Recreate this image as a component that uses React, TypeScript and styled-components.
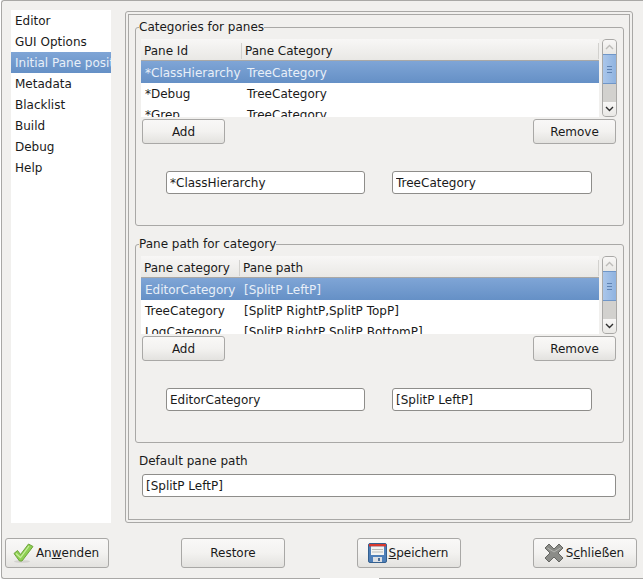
import React from 'react'
import styled, {createGlobalStyle} from 'styled-components'

const GlobalStyle = createGlobalStyle`
  html, body {
    margin: 0;
    padding: 0;
    background: #fff;
  }
  * {
    box-sizing: border-box;
  }
`

const Window = styled.div`
  position: relative;
  width: 642px;
  height: 579px;
  margin-left: 1px;
  padding: 9px 5px 9px 8px;
  display: flex;
  flex-direction: column;
  background: #f1f0ee;
  border: 1px solid #a9a8a6;
  border-right: 0;
  border-radius: 3px 0 0 3px;
  font-family: "DejaVu Sans", sans-serif;
  font-size: 12px;
  color: #1a1a1a;
`
const BottomGap = styled.div`
  position: absolute;
  left: 318px;
  bottom: -1px;
  width: 59px;
  height: 1px;
  background: #fff;
`
const Main = styled.div`
  display: flex;
  height: 513px;
  margin-left: 1px;
`
const Sidebar = styled.ul`
  list-style: none;
  margin: 0 14px 0 0;
  padding: 0;
  width: 100px;
  background: #fff;
  overflow: hidden;
`
const SideItem = styled.li<{$active?: boolean}>`
  height: 21px;
  line-height: 21px;
  padding: 1px 0 0 4px;
  white-space: nowrap;
  color: ${p => (p.$active ? '#e8eff8' : '#1a1a1a')};
  background: ${p => (p.$active ? 'linear-gradient(#7fa5d6, #6590c6)' : 'transparent')};
`
const NotebookOuter = styled.div`
  width: 508px;
  height: 512px;
  margin-top: 1px;
  padding: 2px;
  border: 1px solid #a9a8a6;
  border-radius: 3px;
`
const NotebookInner = styled.div`
  height: 100%;
  padding: 5px 5px 0 6px;
  border: 1px solid #a9a8a6;
  display: flex;
  flex-direction: column;
`
const Group = styled.fieldset`
  margin: 0 0 11px;
  padding: 0 6px 0 5px;
  height: 206px;
  min-width: 0;
  border: 1px solid #a9a8a6;
  border-radius: 3px;
`
const GroupTitle = styled.legend`
  padding: 0;
  margin-left: -2px;
  height: 15px;
  line-height: 15px;
`
const TableRow = styled.div`
  display: flex;
  gap: 3px;
  height: 78px;
  margin-top: 4px;
`
const Table = styled.div`
  width: 458px;
  height: 78px;
  overflow: hidden;
  background: #fff;
`
const HeaderRow = styled.div`
  display: flex;
  height: 22px;
  padding-top: 3px;
  align-items: center;
  background: linear-gradient(#f8f7f6, #e9e8e5);
  border-bottom: 1px solid #a9a8a6;
`
const HeaderCell = styled.div<{$width?: number}>`
  height: 16px;
  line-height: 16px;
  padding-left: 3px;
  width: ${p => (p.$width ? `${p.$width}px` : 'auto')};
  flex: ${p => (p.$width ? 'none' : 1)};
  border-right: 1px solid #d2d1ce;
`
const Row = styled.div<{$selected?: boolean}>`
  display: flex;
  height: ${p => (p.$selected ? 22 : 21)}px;
  line-height: 21px;
  padding-top: ${p => (p.$selected ? 2 : 1)}px;
  white-space: nowrap;
  color: ${p => (p.$selected ? '#e8eff8' : '#1a1a1a')};
  background: ${p => (p.$selected ? 'linear-gradient(#7fa5d6, #6590c6)' : 'transparent')};
`
const Cell = styled.div<{$width: number}>`
  width: ${p => p.$width}px;
  flex: none;
  padding-left: 4px;
`
const Scrollbar = styled.div`
  width: 15px;
  height: 78px;
  display: flex;
  flex-direction: column;
  border: 1px solid #a9a8a6;
  border-radius: 4px;
  overflow: hidden;
  background: #d2d1ce;
`
const ScrollButton = styled.div`
  height: 14px;
  flex: none;
  display: flex;
  align-items: center;
  justify-content: center;
  background: linear-gradient(#f8f7f6, #e9e8e5);
`
const ScrollThumb = styled.div`
  height: 30px;
  flex: none;
  display: flex;
  flex-direction: column;
  align-items: center;
  justify-content: center;
  gap: 2px;
  background: linear-gradient(90deg, #aac6ea, #8fb3e0);
  border-top: 1px solid #6f96c8;
  border-bottom: 1px solid #6f96c8;
`
const ThumbLine = styled.div`
  width: 5px;
  height: 1px;
  background: #5f83b3;
`
const ScrollTrack = styled.div`
  flex: 1;
`
const ActionRow = styled.div`
  display: flex;
  justify-content: space-between;
  margin: 2px 0 0 1px;
  width: 474px;
`
const PushButton = styled.button`
  display: flex;
  align-items: center;
  justify-content: center;
  width: 83px;
  height: 25px;
  padding: 0;
  font: inherit;
  color: #1a1a1a;
  background: linear-gradient(#f9f8f7 0%, #f3f2f0 50%, #e3e2df 100%);
  border: 1px solid #a9a8a6;
  border-radius: 3px;
`
const FieldRow = styled.div`
  display: flex;
  gap: 27px;
  margin: 27px 0 0 25px;
`
const TextInput = styled.input<{$width: number}>`
  display: block;
  width: ${p => p.$width}px;
  height: 23px;
  padding: 0 3px;
  font: inherit;
  color: #1a1a1a;
  background: #fff;
  border: 1px solid #8e8d8a;
  border-radius: 3px;
  outline: none;
`
const DefaultPath = styled.div`
  padding-left: 7px;
`
const DefaultLabel = styled.div`
  height: 16px;
  line-height: 16px;
  margin: -1px 0 5px -3px;
`
const Footer = styled.div`
  display: flex;
  justify-content: space-between;
  margin: 15px 1px 0 -5px;
`
const DialogButton = styled.button`
  display: flex;
  align-items: center;
  justify-content: center;
  gap: 2px;
  width: 104px;
  height: 30px;
  padding: 0;
  font: inherit;
  color: #1a1a1a;
  background: linear-gradient(#f9f8f7 0%, #f3f2f0 50%, #e3e2df 100%);
  border: 1px solid #a9a8a6;
  border-radius: 3px;
`
const ButtonLabel = styled.span`
  margin-right: 2px;
`
const Mnemonic = styled.span`
  text-decoration: underline;
`

const CheckIcon = () => (
  <svg width="21" height="20" viewBox="0 0 21 20">
    <ellipse cx="9" cy="18.5" rx="8" ry="1.3" fill="#d3d2cf" />
    <path d="M1 10.5 L4.5 7.5 L7.5 11.5 L15.5 1 L20 3.5 L9 18 L6.5 18 Z" fill="#8ed052" stroke="#6ea33c" strokeWidth="1" strokeLinejoin="round" />
    <path d="M3 10.5 L7.5 14.5 L16 3" fill="none" stroke="#c9ee9f" strokeWidth="1.2" />
  </svg>
)

const SaveIcon = () => (
  <svg width="19" height="20" viewBox="0 0 19 20">
    <rect x="0.5" y="0.5" width="18" height="19" rx="1.5" fill="#4f7fb8" stroke="#35608f" />
    <rect x="1" y="1" width="17" height="2.5" fill="#d8392f" />
    <rect x="3" y="3.5" width="13" height="8.5" fill="#f4f4f2" />
    <path d="M4 6.5h11M4 9h11" stroke="#bcbcb9" strokeWidth="1" />
    <rect x="5" y="14" width="9" height="5" fill="#dcdfe3" />
    <rect x="10" y="15" width="2" height="3" fill="#4d6f99" />
  </svg>
)

const CloseIcon = () => (
  <svg width="20" height="20" viewBox="0 0 20 20">
    <path d="M1 5 L5 1 L10 6 L15 1 L19 5 L14 10 L19 15 L15 19 L10 14 L5 19 L1 15 L6 10 Z" fill="#8b8c88" stroke="#656662" strokeWidth="1" strokeLinejoin="round" />
    <path d="M3.5 5 L10 9 L16.5 5" fill="none" stroke="#b4b5b1" strokeWidth="1" />
  </svg>
)

const ArrowUp = () => (
  <svg width="9" height="6" viewBox="0 0 9 6">
    <path d="M1 5 L4.5 1.5 L8 5" fill="none" stroke="#bdbcb9" strokeWidth="1.4" />
  </svg>
)

const ArrowDown = () => (
  <svg width="9" height="6" viewBox="0 0 9 6">
    <path d="M1 1 L4.5 4.5 L8 1" fill="none" stroke="#2e2e2e" strokeWidth="1.4" />
  </svg>
)

interface PaneTableProps {
  headers: [string, string]
  headerWidth: number
  firstWidth: number
  rows: [string, string][]
}

const PaneTable = ({headers, headerWidth, firstWidth, rows}: PaneTableProps) => (
  <TableRow>
    <Table>
      <HeaderRow>
        <HeaderCell $width={headerWidth}>{headers[0]}</HeaderCell>
        <HeaderCell>{headers[1]}</HeaderCell>
      </HeaderRow>
      {rows.map((row, i) => (
        <Row key={row[0]} $selected={i === 0}>
          <Cell $width={firstWidth}>{row[0]}</Cell>
          <Cell $width={300}>{row[1]}</Cell>
        </Row>
      ))}
    </Table>
    <Scrollbar>
      <ScrollButton><ArrowUp /></ScrollButton>
      <ScrollThumb>
        <ThumbLine />
        <ThumbLine />
        <ThumbLine />
      </ScrollThumb>
      <ScrollTrack />
      <ScrollButton><ArrowDown /></ScrollButton>
    </Scrollbar>
  </TableRow>
)

interface PaneGroupProps extends PaneTableProps {
  title: string
  values: [string, string]
}

const PaneGroup = ({title, values, ...table}: PaneGroupProps) => (
  <Group>
    <GroupTitle>{title}</GroupTitle>
    <PaneTable {...table} />
    <ActionRow>
      <PushButton>Add</PushButton>
      <PushButton>Remove</PushButton>
    </ActionRow>
    <FieldRow>
      <TextInput $width={199} readOnly value={values[0]} />
      <TextInput $width={200} readOnly value={values[1]} />
    </FieldRow>
  </Group>
)

const sections = ['Editor', 'GUI Options', 'Initial Pane positions', 'Metadata', 'Blacklist', 'Build', 'Debug', 'Help']

const App = () => (
  <>
    <GlobalStyle />
    <Window>
      <Main>
        <Sidebar>
          {sections.map(name => (
            <SideItem key={name} $active={name.startsWith('Initial')}>{name}</SideItem>
          ))}
        </Sidebar>
        <NotebookOuter>
          <NotebookInner>
            <PaneGroup
              title="Categories for panes"
              headers={['Pane Id', 'Pane Category']}
              headerWidth={101}
              firstWidth={102}
              rows={[
                ['*ClassHierarchy', 'TreeCategory'],
                ['*Debug', 'TreeCategory'],
                ['*Grep', 'TreeCategory'],
              ]}
              values={['*ClassHierarchy', 'TreeCategory']}
            />
            <PaneGroup
              title="Pane path for category"
              headers={['Pane category', 'Pane path']}
              headerWidth={99}
              firstWidth={99}
              rows={[
                ['EditorCategory', '[SplitP LeftP]'],
                ['TreeCategory', '[SplitP RightP,SplitP TopP]'],
                ['LogCategory', '[SplitP RightP,SplitP BottomP]'],
              ]}
              values={['EditorCategory', '[SplitP LeftP]']}
            />
            <DefaultPath>
              <DefaultLabel>Default pane path</DefaultLabel>
              <TextInput $width={474} readOnly value="[SplitP LeftP]" />
            </DefaultPath>
          </NotebookInner>
        </NotebookOuter>
      </Main>
      <Footer>
        <DialogButton><CheckIcon /><ButtonLabel>An<Mnemonic>w</Mnemonic>enden</ButtonLabel></DialogButton>
        <DialogButton>Restore</DialogButton>
        <DialogButton><SaveIcon /><ButtonLabel><Mnemonic>S</Mnemonic>peichern</ButtonLabel></DialogButton>
        <DialogButton><CloseIcon /><ButtonLabel>S<Mnemonic>c</Mnemonic>hließen</ButtonLabel></DialogButton>
      </Footer>
      <BottomGap />
    </Window>
  </>
)

export default App
